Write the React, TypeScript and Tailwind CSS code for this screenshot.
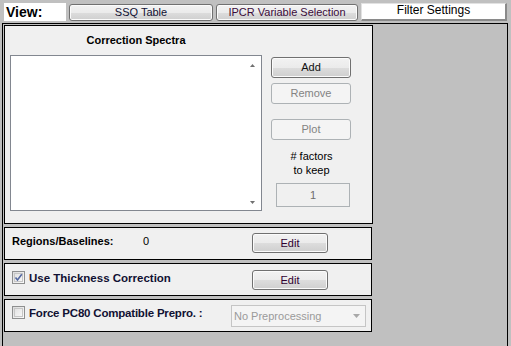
import React from "react";

const btnActive =
  "flex items-center justify-center rounded-[3px] border border-[#707070] bg-[linear-gradient(to_bottom,#f2f2f2_0%,#ebebeb_50%,#dddddd_51%,#cfcfcf_100%)] shadow-[inset_0_0_0_1px_#fbfbfb] text-[11px] leading-none";

const btnDisabled =
  "flex items-center justify-center rounded-[3px] border border-[#adb2b5] bg-[#f4f4f4] text-[11px] leading-none text-[#838383]";

const Checkbox = ({ checked }: { checked?: boolean }) => (
  <div className="w-[13px] h-[13px] shrink-0 border border-[#8e8f8f] bg-[linear-gradient(135deg,#dcdcdc,#fbfbfb)] p-[1px]">
    <div className="w-full h-full border border-[#c6c6c6] bg-[linear-gradient(135deg,#e3e3e3,#f7f7f7)] relative">
      {checked && (
        <svg viewBox="0 0 9 9" className="absolute -left-[1px] -top-[1px] w-[9px] h-[9px]">
          <path d="M1.5 4.5 L3.5 7 L7.8 1.2" fill="none" stroke="#5468a0" strokeWidth="1.6" />
        </svg>
      )}
    </div>
  </div>
);

const EditButton = ({ top }: { top: string }) => (
  <div className={`${btnActive} ${top} ml-auto mr-[43px] w-[76px] h-[20px] text-[#300030]`}>Edit</div>
);

export default function App() {
  return (
    <div className="w-[511px] h-[346px] bg-[#c0c0c0] overflow-hidden font-['Liberation_Sans',Arial,sans-serif] text-black">
      {/* view switcher */}
      <div className="h-[23px] flex items-start pt-[3px] pl-[4px]">
        <div className="w-[62px] h-[18px] bg-white pl-[2px] text-[14px] font-bold leading-[18px]">View:</div>
        <div className={`${btnActive} ml-[3px] mt-[1px] w-[144px] h-[17px] text-[#111133]`}>SSQ Table</div>
        <div className={`${btnActive} ml-[3px] mt-[1px] w-[142px] h-[17px] text-[#3a0a3a]`}>IPCR Variable Selection</div>
        <div className="ml-[3px] w-[146px] h-[18px] bg-white border border-[#e2e2e2] border-r-2 border-b-2 border-r-[#8a8a8a] border-b-[#8a8a8a] flex justify-center text-[12px] leading-[13px]">
          Filter Settings
        </div>
      </div>

      <div className="ml-[2px] w-[506px] h-[323px] border-l border-t border-r border-black p-[1px] flex flex-col gap-[3px]">
        {/* correction spectra */}
        <div className="w-[369px] h-[199px] border border-black bg-[#f0f0f0] flex">
          <div className="ml-[5px] w-[252px]">
            <div className="mt-[7px] h-[14px] text-center text-[11px] font-bold leading-[14px]">Correction Spectra</div>
            <div className="mt-[8px] h-[156px] border border-[#828790] bg-white flex justify-end">
              <div className="w-[17px] flex flex-col items-center justify-between pt-[8px] pb-[6px]">
                <svg width="5" height="3" viewBox="0 0 5 3">
                  <path d="M0 3 L2.5 0 L5 3 Z" fill="#707070" />
                </svg>
                <svg width="5" height="3" viewBox="0 0 5 3">
                  <path d="M0 0 L5 0 L2.5 3 Z" fill="#707070" />
                </svg>
              </div>
            </div>
          </div>
          <div className="ml-[9px] w-[80px] flex flex-col">
            <div className={`${btnActive} mt-[31px] h-[21px] text-[#111]`}>Add</div>
            <div className={`${btnDisabled} mt-[5px] h-[21px]`}>Remove</div>
            <div className={`${btnDisabled} mt-[15px] h-[21px]`}>Plot</div>
            <div className="mt-[9px] ml-[1px] text-center text-[11px] leading-[14px]">
              # factors
              <br />
              to keep
            </div>
            <div className="mt-[6px] ml-[5px] w-[74px] h-[24px] border border-[#adb2b5] bg-[#f0f0f0] flex items-center justify-center text-[11px] text-[#6d6d6d]">
              1
            </div>
          </div>
        </div>

        {/* regions */}
        <div className="w-[368px] h-[33px] border border-black bg-[#f0f0f0] flex items-start">
          <div className="ml-[7px] mt-[6px] w-[131px] text-[11px] font-bold leading-[14px]">Regions/Baselines:</div>
          <div className="mt-[6px] text-[11px] leading-[14px]">0</div>
          <EditButton top="mt-[5px]" />
        </div>

        {/* thickness */}
        <div className="w-[368px] h-[33px] border border-black bg-[#f0f0f0] flex items-start">
          <div className="ml-[7px] mt-[7px]">
            <Checkbox checked />
          </div>
          <div className="ml-[4px] mt-[7px] text-[11.5px] font-bold leading-[14px] text-[#111133]">Use Thickness Correction</div>
          <EditButton top="mt-[6px]" />
        </div>

        {/* preprocessing */}
        <div className="w-[368px] h-[33px] border border-black bg-[#f0f0f0] flex items-start">
          <div className="ml-[7px] mt-[6px]">
            <Checkbox />
          </div>
          <div className="ml-[4px] mt-[6px] text-[11.5px] font-bold leading-[14px] tracking-[-0.2px] text-[#111133]">
            Force PC80 Compatible Prepro. :
          </div>
          <div className="ml-auto mr-[5px] mt-[5px] w-[135px] h-[22px] border border-[#c5c5c5] bg-[#f4f4f4] flex items-center pl-[2px] pr-[5px] text-[11px] text-[#9a9a9a]">
            <span>No Preprocessing</span>
            <svg className="ml-auto" width="7" height="4" viewBox="0 0 7 4">
              <path d="M0 0 L7 0 L3.5 4 Z" fill="#a8a8a8" />
            </svg>
          </div>
        </div>
      </div>
    </div>
  );
}
